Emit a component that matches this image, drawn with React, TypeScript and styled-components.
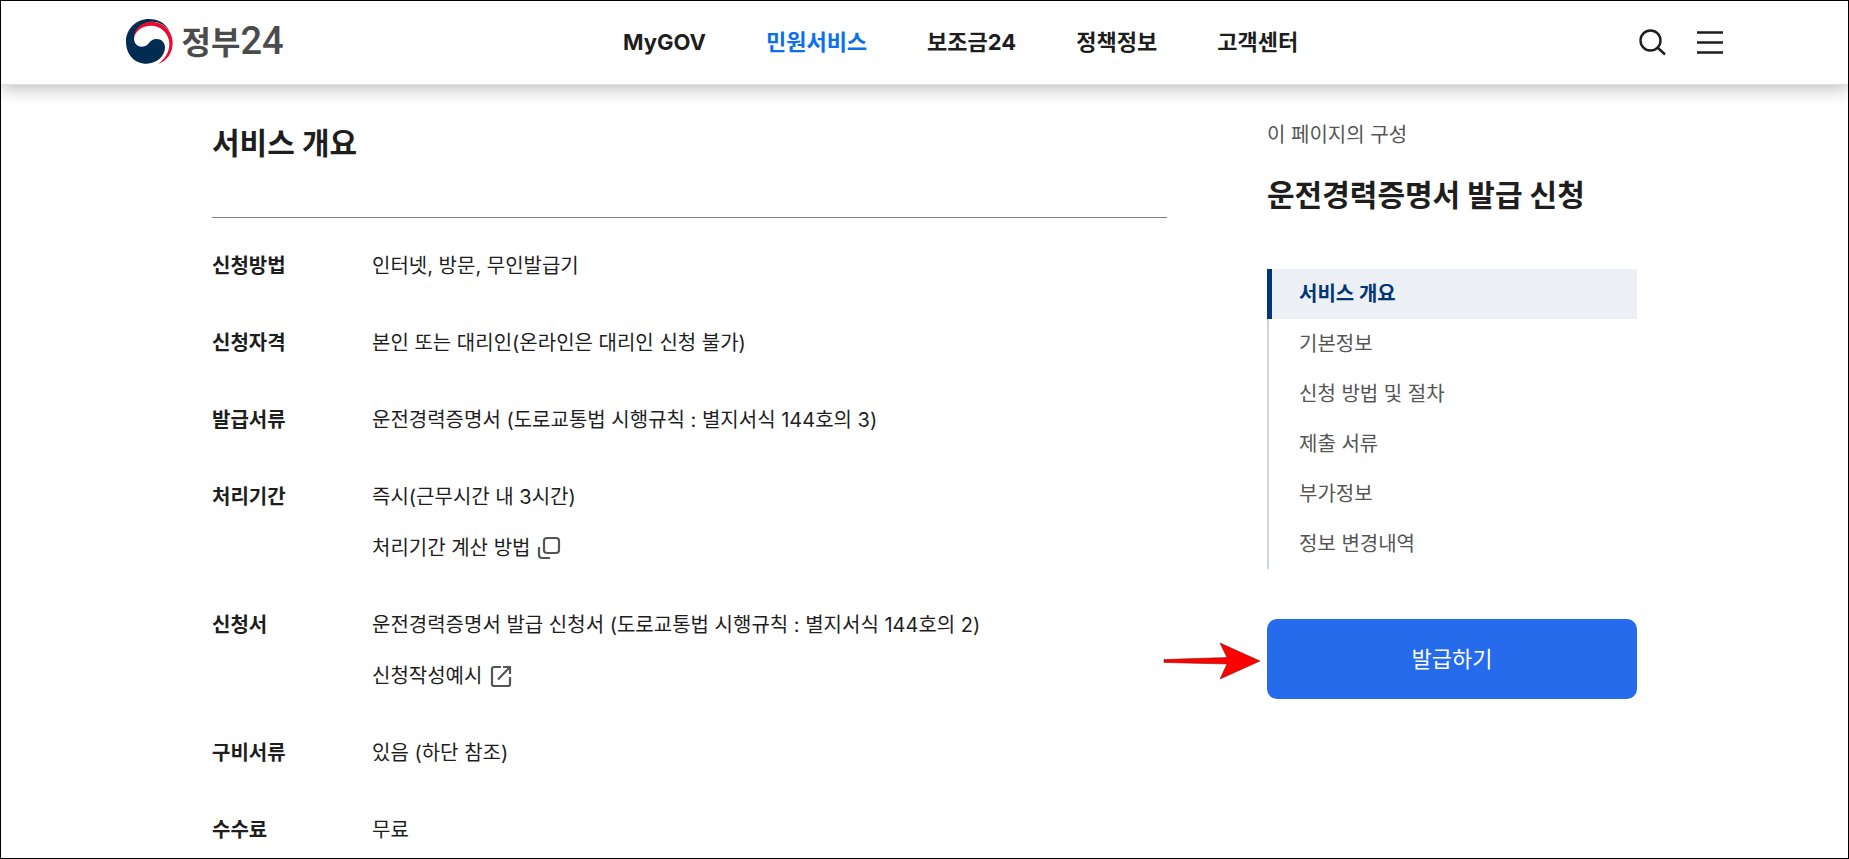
import React from "react";
import styled, { createGlobalStyle } from "styled-components";

const GlobalStyle = createGlobalStyle`
  *, *::before, *::after { box-sizing: border-box; }
  body {
    margin: 0;
    background: #fff;
    color: #1e1e1e;
    font-family: Inter, "Noto Sans CJK KR", sans-serif;
    font-size: 20px;
    line-height: 32px;
  }
  h1, h2, p, ul, dl, dd { margin: 0; padding: 0; }
  ul { list-style: none; }
  a { color: inherit; text-decoration: none; }
  button { font-family: inherit; cursor: pointer; }
`;

const Page = styled.div`
  min-height: 100vh;
  border: 1px solid #000;
`;

const Header = styled.header`
  border-bottom: 1px solid #dde1ee;
  box-shadow: 0 4px 16px rgba(0, 0, 0, 0.26);
  clip-path: inset(0 0 -24px 0);
`;

const HeaderInner = styled.div`
  display: flex;
  align-items: center;
  justify-content: space-between;
  max-width: 1602px;
  height: 83px;
  margin: 0 auto;
  padding: 0 0 2px 2px;
`;

const Logo = styled.a`
  display: flex;
  align-items: center;
  gap: 9px;
  color: #4b4b4d;
  line-height: 40px;
`;

const LogoText = styled.span`
  font-size: 32px;
  font-weight: 700;
`;

const LogoNumber = styled.span`
  font-family: Roboto, sans-serif;
  font-size: 38px;
  font-weight: 500;
`;

const Nav = styled.nav`
  display: flex;
  gap: 60px;
`;

const NavLink = styled.a<{ $active?: boolean }>`
  color: ${(p) => (p.$active ? "#0b6fee" : "#1e1e1e")};
  font-size: 22px;
  font-weight: 700;
`;

const Tools = styled.div`
  display: flex;
  gap: 28px;
`;

const IconButton = styled.button`
  display: flex;
  padding: 0;
  border: 0;
  background: none;
  color: #1e1e1e;
`;

const Columns = styled.div`
  display: flex;
  align-items: flex-start;
  gap: 100px;
  max-width: 1425px;
  margin: 0 auto;
  padding-top: 34px;
`;

const Main = styled.main`
  flex: 1;
  min-width: 0;
`;

const Title = styled.h2`
  font-size: 30px;
  font-weight: 700;
  line-height: 48px;
`;

const Summary = styled.dl`
  display: flex;
  flex-direction: column;
  gap: 45px;
  margin-top: 50px;
  padding-top: 32px;
  border-top: 1px solid #808080;
`;

const SummaryRow = styled.div`
  display: grid;
  grid-template-columns: 160px 1fr;
`;

const Term = styled.dt`
  font-weight: 700;
`;

const Detail = styled.dd`
  display: flex;
  flex-direction: column;
  align-items: flex-start;
  gap: 19px;
`;

const DetailLink = styled.a`
  display: flex;
  align-items: center;
  gap: 7px;
  svg { color: #555; }
`;

const Aside = styled.aside`
  width: 370px;
`;

const AsideLabel = styled.p`
  color: #555;
`;

const AsideTitle = styled(Title)`
  margin: 20px 0 50px;
`;

const Toc = styled.ul`
  margin-bottom: 50px;
`;

const TocLink = styled.a<{ $active?: boolean }>`
  display: block;
  padding: 9px 0 9px ${(p) => (p.$active ? 27 : 30)}px;
  border-left: ${(p) => (p.$active ? "5px solid #003675" : "2px solid #cdd6e4")};
  background: ${(p) => (p.$active ? "#eceff4" : "transparent")};
  color: ${(p) => (p.$active ? "#003675" : "#555")};
  font-weight: ${(p) => (p.$active ? 700 : 400)};
`;

const Action = styled.div`
  position: relative;
`;

const SubmitButton = styled.button`
  width: 100%;
  height: 80px;
  border: 0;
  border-radius: 10px;
  background: #256bec;
  color: #fff;
  font-size: 22px;
  line-height: 32px;
`;

const Arrow = styled.svg`
  position: absolute;
  top: 23px;
  right: 100%;
  margin-right: 6px;
`;

const Emblem = () => (
  <svg width="47" height="45" viewBox="0 0 141 135" aria-hidden="true">
    <path
      fill="#022c52"
      d="M131 36C119 13 96 0 69 0C30 0 0 30 0 68C0 106 26 134 61 134C93 134 117 112 117 85C117 70 106 60 92 60C66 60 73 83 47 83C33 83 24 73 24 57C26 30 51 8 79 8C101 8 120 21 131 36Z"
    />
    <path
      fill="#ea0a2e"
      d="M24 57C24 29 47 8 76 8C111 8 140 36 140 71C140 103 121 127 95 135C117 121 131 99 130 72C128 42 104 20 74 20C48 20 29 35 24 57Z"
    />
  </svg>
);

const SearchIcon = () => (
  <svg width="28" height="28" viewBox="0 0 28 28" fill="none" stroke="currentColor" strokeWidth="2.4" aria-hidden="true">
    <circle cx="12.5" cy="12.5" r="10" />
    <path d="M19.5 19.5L27 26.5" />
  </svg>
);

const MenuIcon = () => (
  <svg width="32" height="28" viewBox="0 0 32 28" fill="none" stroke="currentColor" strokeWidth="2.5" aria-hidden="true">
    <path d="M3 4.5H29M3 14.5H29M3 24.5H29" />
  </svg>
);

const LayerIcon = () => (
  <svg width="24" height="24" viewBox="0 0 24 24" fill="none" stroke="currentColor" strokeWidth="2.2" aria-hidden="true">
    <rect x="7" y="2" width="15" height="15" rx="3" />
    <path d="M2 11V19Q2 22 5 22H13" />
  </svg>
);

const OutlinkIcon = () => (
  <svg width="24" height="24" viewBox="0 0 24 24" fill="none" stroke="currentColor" strokeWidth="2.2" aria-hidden="true">
    <path d="M12 3H5Q3 3 3 5V20Q3 22 5 22H19Q21 22 21 20V13M14 3H21V10M21 3L9 15.5" />
  </svg>
);

const navItems = ["MyGOV", "민원서비스", "보조금24", "정책정보", "고객센터"];

const rows: { term: string; text: string; link?: string; icon?: React.ReactNode }[] = [
  { term: "신청방법", text: "인터넷, 방문, 무인발급기" },
  { term: "신청자격", text: "본인 또는 대리인(온라인은 대리인 신청 불가)" },
  { term: "발급서류", text: "운전경력증명서 (도로교통법 시행규칙 : 별지서식 144호의 3)" },
  { term: "처리기간", text: "즉시(근무시간 내 3시간)", link: "처리기간 계산 방법", icon: <LayerIcon /> },
  {
    term: "신청서",
    text: "운전경력증명서 발급 신청서 (도로교통법 시행규칙 : 별지서식 144호의 2)",
    link: "신청작성예시",
    icon: <OutlinkIcon />,
  },
  { term: "구비서류", text: "있음 (하단 참조)" },
  { term: "수수료", text: "무료" },
];

const tocItems = ["서비스 개요", "기본정보", "신청 방법 및 절차", "제출 서류", "부가정보", "정보 변경내역"];

export default function App() {
  return (
    <>
      <GlobalStyle />
      <Page>
        <Header>
          <HeaderInner>
            <Logo href="#">
              <Emblem />
              <LogoText>
                정부<LogoNumber>24</LogoNumber>
              </LogoText>
            </Logo>
            <Nav>
              {navItems.map((item) => (
                <NavLink key={item} href="#" $active={item === "민원서비스"}>
                  {item}
                </NavLink>
              ))}
            </Nav>
            <Tools>
              <IconButton type="button" aria-label="검색">
                <SearchIcon />
              </IconButton>
              <IconButton type="button" aria-label="전체메뉴">
                <MenuIcon />
              </IconButton>
            </Tools>
          </HeaderInner>
        </Header>
        <Columns>
          <Main>
            <Title>서비스 개요</Title>
            <Summary>
              {rows.map((row) => (
                <SummaryRow key={row.term}>
                  <Term>{row.term}</Term>
                  <Detail>
                    <span>{row.text}</span>
                    {row.link && (
                      <DetailLink href="#">
                        {row.link}
                        {row.icon}
                      </DetailLink>
                    )}
                  </Detail>
                </SummaryRow>
              ))}
            </Summary>
          </Main>
          <Aside>
            <AsideLabel>이 페이지의 구성</AsideLabel>
            <AsideTitle>운전경력증명서 발급 신청</AsideTitle>
            <Toc>
              {tocItems.map((item, i) => (
                <li key={item}>
                  <TocLink href="#" $active={i === 0}>
                    {item}
                  </TocLink>
                </li>
              ))}
            </Toc>
            <Action>
              <Arrow width="98" height="38" viewBox="0 0 98 38" aria-hidden="true">
                <path
                  d="M1 17.5L64 15.5L57 1L97 19L57 37L64 22L1 20.5Z"
                  fill="#fe0000"
                  stroke="#7a1a1a"
                  strokeWidth="0.6"
                />
              </Arrow>
              <SubmitButton type="button">발급하기</SubmitButton>
            </Action>
          </Aside>
        </Columns>
      </Page>
    </>
  );
}
